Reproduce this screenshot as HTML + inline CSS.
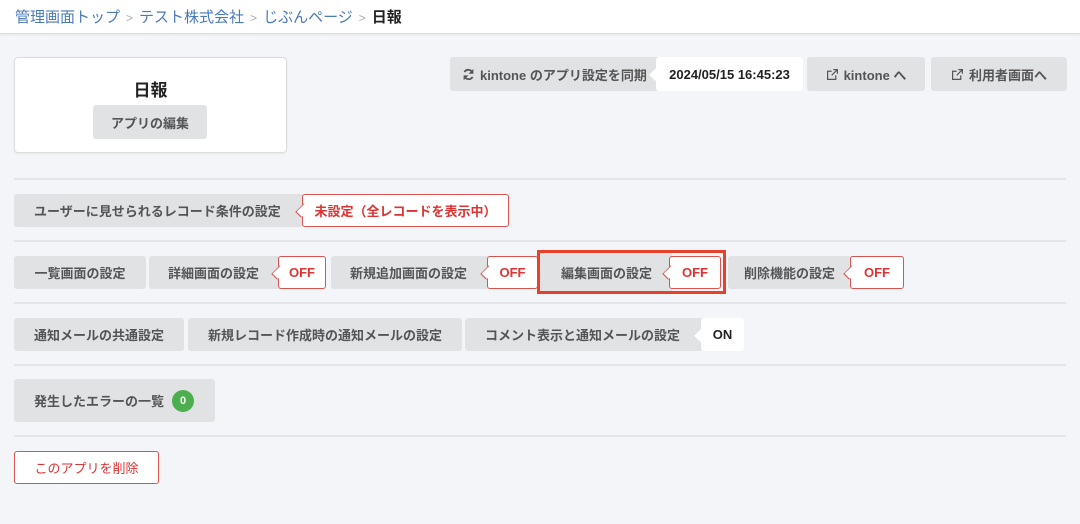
<!DOCTYPE html>
<html><head><meta charset="utf-8"><style>
*{box-sizing:border-box;margin:0;padding:0}
body{width:1080px;height:524px;background:#f4f5f9;font-family:"Liberation Sans","Noto Sans CJK JP",sans-serif;position:relative;overflow:hidden}
.hdr{position:absolute;left:0;top:0;width:1080px;height:34px;background:#fff;border-bottom:1px solid #ddd;box-shadow:0 1px 2px rgba(0,0,0,.06)}
.bc{position:absolute;left:15px;top:6px;font-size:15px;color:#4a7ab8;white-space:nowrap}
.bc .s{color:#aaa;font-size:12px;margin:0 6px}
.bc b{color:#222}
.a{position:absolute;white-space:nowrap}
.btn{position:absolute;background:#e1e2e4;border-radius:3px;color:#555;font-size:13px;font-weight:bold;display:flex;align-items:center;justify-content:center;white-space:nowrap}
.tag{position:absolute;background:#fff;border:1px solid #d9534f;border-radius:3px;color:#d33;font-size:13px;font-weight:bold;display:flex;align-items:center;justify-content:center;white-space:nowrap}
.tag:before{content:"";position:absolute;left:-6px;top:50%;margin-top:-6px;width:10px;height:10px;background:#fff;border-left:1px solid #d9534f;border-bottom:1px solid #d9534f;transform:rotate(45deg) scale(.75,1.1)}
.tag.w{border-color:#fff;color:#222}
.tag.w:before{border-color:#fff}
.hr{position:absolute;left:14px;width:1052px;height:2px;background:#e4e5e8}
</style></head><body>
<div class="hdr"><div class="bc">管理画面トップ<span class="s">&gt;</span>テスト株式会社<span class="s">&gt;</span>じぶんページ<span class="s">&gt;</span><b>日報</b></div></div>

<div class="a" style="left:14px;top:57px;width:273px;height:96px;background:#fff;border:1px solid #ddd;border-radius:4px;box-shadow:0 1px 2px rgba(0,0,0,.06)"></div>
<div class="a" style="left:14px;top:76px;width:273px;text-align:center;font-size:17px;font-weight:bold;color:#222">日報</div>
<div class="btn" style="left:93px;top:105px;width:114px;height:34px">アプリの編集</div>

<div class="btn" style="left:450px;top:57px;width:210px;height:34px;justify-content:flex-start;padding-left:12px"><svg width="13" height="13" viewBox="0 0 16 16" style="margin-right:5px"><path d="M13 6A5.5 5.5 0 0 0 3 5M3 10a5.5 5.5 0 0 0 10 1" stroke="#555" stroke-width="2.2" fill="none"/><path d="M14 1v6H8z M2 15V9h6z" fill="#555"/></svg>kintone のアプリ設定を同期</div>
<div class="tag w" style="left:656px;top:57px;width:147px;height:34px;color:#222">2024/05/15 16:45:23</div>
<div class="btn" style="left:807px;top:57px;width:118px;height:34px"><svg width="13" height="13" viewBox="0 0 16 16" style="margin-right:5px"><path d="M12 9v5H2V4h5M9 2h5v5M14 2L7 9" stroke="#555" stroke-width="1.5" fill="none"/></svg>kintone へ</div>
<div class="btn" style="left:931px;top:57px;width:136px;height:34px"><svg width="13" height="13" viewBox="0 0 16 16" style="margin-right:5px"><path d="M12 9v5H2V4h5M9 2h5v5M14 2L7 9" stroke="#555" stroke-width="1.5" fill="none"/></svg>利用者画面へ</div>

<div class="hr" style="top:178px"></div>
<div class="btn" style="left:14px;top:194px;width:290px;height:33px;justify-content:flex-start;padding-left:20px">ユーザーに見せられるレコード条件の設定</div>
<div class="tag" style="left:302px;top:194px;width:207px;height:33px">未設定（全レコードを表示中）</div>

<div class="hr" style="top:240px"></div>
<div class="btn" style="left:14px;top:256px;width:132px;height:33px">一覧画面の設定</div>
<div class="btn" style="left:149px;top:256px;width:132px;height:33px;justify-content:flex-start;padding-left:19px">詳細画面の設定</div>
<div class="tag" style="left:278px;top:256px;width:48px;height:33px">OFF</div>
<div class="btn" style="left:331px;top:256px;width:160px;height:33px;justify-content:flex-start;padding-left:19px">新規追加画面の設定</div>
<div class="tag" style="left:487px;top:256px;width:51px;height:33px">OFF</div>
<div class="a" style="left:537px;top:250px;width:189px;height:44px;border:3px solid #e8412b"></div>
<div class="btn" style="left:540px;top:253px;width:132px;height:38px;border-radius:0;justify-content:flex-start;padding-left:21px">編集画面の設定</div>
<div class="tag" style="left:669px;top:256px;width:52px;height:33px">OFF</div>
<div class="btn" style="left:728px;top:256px;width:126px;height:33px;justify-content:flex-start;padding-left:16px">削除機能の設定</div>
<div class="tag" style="left:850px;top:256px;width:54px;height:33px">OFF</div>

<div class="hr" style="top:302px"></div>
<div class="btn" style="left:14px;top:318px;width:170px;height:33px">通知メールの共通設定</div>
<div class="btn" style="left:188px;top:318px;width:274px;height:33px">新規レコード作成時の通知メールの設定</div>
<div class="btn" style="left:465px;top:318px;width:240px;height:33px;justify-content:flex-start;padding-left:20px">コメント表示と通知メールの設定</div>
<div class="tag w" style="left:701px;top:318px;width:43px;height:33px">ON</div>

<div class="hr" style="top:364px"></div>
<div class="btn" style="left:14px;top:379px;width:201px;height:43px;justify-content:flex-start;padding-left:20px">発生したエラーの一覧<span style="display:inline-block;margin-left:8px;width:22px;height:22px;border-radius:50%;background:#4cae4c;color:#fff;font-size:11px;text-align:center;line-height:22px">0</span></div>

<div class="hr" style="top:435px"></div>
<div class="a" style="left:14px;top:451px;width:145px;height:33px;border:1px solid #d9534f;border-radius:3px;background:#fff;color:#d33;font-size:13px;display:flex;align-items:center;justify-content:center">このアプリを削除</div>
</body></html>
